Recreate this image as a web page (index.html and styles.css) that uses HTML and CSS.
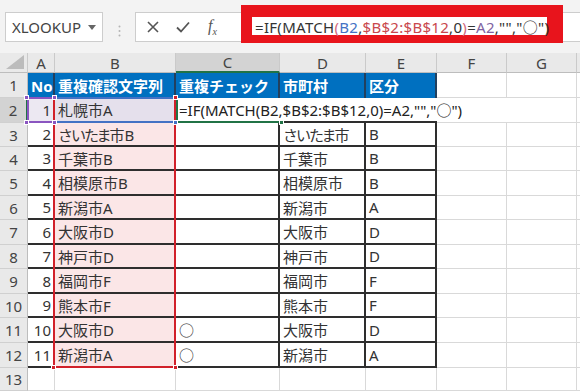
FILE: index.html
```html
<!DOCTYPE html>
<html lang="ja">
<head>
    <meta charset="UTF-8">
    <title>重複チェック</title>
    <link rel="stylesheet" href="styles.css">
</head>
<body>
    <div class="topbar">
        <div class="namebox">
            <span>XLOOKUP</span>
            <svg width="8" height="5" viewBox="0 0 8 5"><path d="M0 0H8L4 5Z" fill="#666"/></svg>
        </div>
        <div class="grip">
            <svg width="3" height="12" viewBox="0 0 3 12"><circle cx="1.5" cy="1.5" r="1" fill="#b4b4b4"/><circle cx="1.5" cy="6" r="1" fill="#b4b4b4"/><circle cx="1.5" cy="10.5" r="1" fill="#b4b4b4"/></svg>
        </div>
        <div class="fbar">
            <div class="fbtns">
                <svg class="ico-x" width="12" height="12" viewBox="0 0 12 12"><path d="M1 1L11 11M11 1L1 11" stroke="#555" stroke-width="1.6"/></svg>
                <svg class="ico-ok" width="14" height="12" viewBox="0 0 14 12"><path d="M1 6.5L5 10.5L13 1.5" stroke="#555" stroke-width="1.8" fill="none"/></svg>
                <span class="ico-fx"><i>f</i><sub>x</sub></span>
            </div>
            <div class="finput">
                <span class="fx-text">=IF(MATCH<span class="p-red">(</span><span class="r-blue">B2</span>,<span class="r-red">$B$2:$B$12</span>,0<span class="p-red">)</span>=<span class="r-pur">A2</span>,"","○")</span><span class="caret"></span>
            </div>
        </div>
    </div>

    <div class="sheet">
        <!-- column headers -->
        <div class="ch corner"><svg width="18" height="14" viewBox="0 0 18 14"><path d="M18 0V14H0Z" fill="#bcbcbc"/></svg></div>
        <div class="ch">A</div>
        <div class="ch">B</div>
        <div class="ch ch-sel">C</div>
        <div class="ch">D</div>
        <div class="ch">E</div>
        <div class="ch">F</div>
        <div class="ch">G</div>
        <div class="ch"></div>

        <!-- 1 -->
        <div class="rh">1</div>
        <div class="c t hd">No</div>
        <div class="c t hd">重複確認文字列</div>
        <div class="c t hd">重複チェック</div>
        <div class="c t hd">市町村</div>
        <div class="c t hd">区分</div>
        <div class="c"></div>
        <div class="c"></div>
        <div class="c"></div>

        <!-- 2 -->
        <div class="rh rh-sel">2</div>
        <div class="c t num ref-a">1
            <span class="mk mk-pur tl"></span><span class="mk mk-pur tr"></span><span class="mk mk-pur bl"></span><span class="mk mk-pur br"></span>
        </div>
        <div class="c t rng ref-b">札幌市A
            <span class="mk mk-red tr"></span><span class="mk mk-blue br"></span>
        </div>
        <div class="c t open active"><span class="edit">=IF(MATCH(B2,$B$2:$B$12,0)=A2,"","○")</span>
            <span class="mk mk-green br"></span>
        </div>
        <div class="c t open"></div>
        <div class="c t open"></div>
        <div class="c open"></div>
        <div class="c"></div>
        <div class="c"></div>

        <!-- 3 -->
        <div class="rh">3</div>
        <div class="c t num">2</div>
        <div class="c t rng"><span class="kn">さいたま</span>市B</div>
        <div class="c t"></div>
        <div class="c t"><span class="kn">さいたま</span>市</div>
        <div class="c t">B</div>
        <div class="c"></div>
        <div class="c"></div>
        <div class="c"></div>

        <!-- 4 -->
        <div class="rh">4</div>
        <div class="c t num">3</div>
        <div class="c t rng">千葉市B</div>
        <div class="c t"></div>
        <div class="c t">千葉市</div>
        <div class="c t">B</div>
        <div class="c"></div>
        <div class="c"></div>
        <div class="c"></div>

        <!-- 5 -->
        <div class="rh">5</div>
        <div class="c t num">4</div>
        <div class="c t rng">相模原市B</div>
        <div class="c t"></div>
        <div class="c t">相模原市</div>
        <div class="c t">B</div>
        <div class="c"></div>
        <div class="c"></div>
        <div class="c"></div>

        <!-- 6 -->
        <div class="rh">6</div>
        <div class="c t num">5</div>
        <div class="c t rng">新潟市A</div>
        <div class="c t"></div>
        <div class="c t">新潟市</div>
        <div class="c t">A</div>
        <div class="c"></div>
        <div class="c"></div>
        <div class="c"></div>

        <!-- 7 -->
        <div class="rh">7</div>
        <div class="c t num">6</div>
        <div class="c t rng">大阪市D</div>
        <div class="c t"></div>
        <div class="c t">大阪市</div>
        <div class="c t">D</div>
        <div class="c"></div>
        <div class="c"></div>
        <div class="c"></div>

        <!-- 8 -->
        <div class="rh">8</div>
        <div class="c t num">7</div>
        <div class="c t rng">神戸市D</div>
        <div class="c t"></div>
        <div class="c t">神戸市</div>
        <div class="c t">D</div>
        <div class="c"></div>
        <div class="c"></div>
        <div class="c"></div>

        <!-- 9 -->
        <div class="rh">9</div>
        <div class="c t num">8</div>
        <div class="c t rng">福岡市F</div>
        <div class="c t"></div>
        <div class="c t">福岡市</div>
        <div class="c t">F</div>
        <div class="c"></div>
        <div class="c"></div>
        <div class="c"></div>

        <!-- 10 -->
        <div class="rh">10</div>
        <div class="c t num">9</div>
        <div class="c t rng">熊本市F</div>
        <div class="c t"></div>
        <div class="c t">熊本市</div>
        <div class="c t">F</div>
        <div class="c"></div>
        <div class="c"></div>
        <div class="c"></div>

        <!-- 11 -->
        <div class="rh">11</div>
        <div class="c t num">10</div>
        <div class="c t rng">大阪市D</div>
        <div class="c t">○</div>
        <div class="c t">大阪市</div>
        <div class="c t">D</div>
        <div class="c"></div>
        <div class="c"></div>
        <div class="c"></div>

        <!-- 12 -->
        <div class="rh">12</div>
        <div class="c t num">11</div>
        <div class="c t rng rng-end">新潟市A
            <span class="mk mk-red bl"></span><span class="mk mk-red br"></span>
        </div>
        <div class="c t">○</div>
        <div class="c t">新潟市</div>
        <div class="c t">A</div>
        <div class="c"></div>
        <div class="c"></div>
        <div class="c"></div>

        <!-- 13 -->
        <div class="rh">13</div>
        <div class="c"></div>
        <div class="c"></div>
        <div class="c"></div>
        <div class="c"></div>
        <div class="c"></div>
        <div class="c"></div>
        <div class="c"></div>
        <div class="c"></div>
    </div>
</body>
</html>
```

FILE: styles.css
```css
* {
    margin: 0;
    padding: 0;
    box-sizing: border-box;
}

body {
    width: 580px;
    height: 391px;
    overflow: hidden;
    background: #f3f3f3;
    font-family: "Noto Sans", "Noto Sans CJK JP", sans-serif;
    color: #333;
}

/* ---- formula bar ---- */

.topbar {
    display: flex;
    align-items: flex-start;
    height: 53px;
}

.namebox {
    display: flex;
    align-items: center;
    justify-content: space-between;
    width: 98px;
    height: 30px;
    margin: 12px 0 0 5px;
    padding: 0 6px 0 6px;
    background: #fff;
    border: 1px solid #cdcdcd;
    font-size: 15px;
    color: #444;
}

.grip {
    width: 32px;
    margin-top: 20px;
    text-align: center;
}

.fbar {
    flex: 1;
    display: flex;
    align-items: flex-start;
    height: 30px;
    margin-top: 12px;
    background: #fff;
    border: 1px solid #cdcdcd;
    border-right: none;
}

.fbtns {
    display: flex;
    align-items: center;
    width: 105px;
    height: 28px;
}

.ico-x {
    margin-left: 11px;
}

.ico-ok {
    margin-left: 17px;
}

.ico-fx {
    margin-left: 18px;
    font-family: "Liberation Serif", serif;
    font-size: 16px;
    color: #555;
}

.ico-fx sub {
    font-size: 10px;
    font-style: italic;
}

.finput {
    display: flex;
    align-items: center;
    width: 322px;
    height: 38px;
    margin-top: -8px;
    padding-left: 3px;
    background: #fff;
    border-style: solid;
    border-color: #e8141c;
    border-width: 12px 16px 8px 11px;
    font-size: 15px;
    letter-spacing: 0.3px;
    white-space: nowrap;
    color: #333;
}

.r-blue { color: #4472c4; }
.r-red { color: #c9474d; }
.r-pur { color: #8064a2; }
.p-red { color: #d2687c; }

.caret {
    width: 1px;
    height: 18px;
    margin-left: 1px;
    background: #000;
}

/* ---- sheet grid ---- */

.sheet {
    display: grid;
    grid-template-columns: 28px 27px 121px 104px 86px 71px 70px 70px 1fr;
    grid-template-rows: 20px 25px 25px 24px 24px 25px 24px 25px 24px 25px 24px 25px 25px 1fr;
    height: 338px;
    background: #fff;
    font-size: 15px;
}

.ch, .rh {
    display: flex;
    align-items: center;
    justify-content: center;
    background: #e9e9e9;
    color: #444;
    border-right: 1px solid #cacaca;
    border-bottom: 1px solid #bdbdbd;
}

.corner {
    justify-content: flex-end;
    align-items: flex-end;
    padding: 0 3px 3px 0;
}

.ch-sel {
    background: #d3d3d3;
    border-bottom: 2px solid #217346;
}

.rh {
    border-bottom-color: #d0d0d0;
    border-right-color: #bdbdbd;
}

.rh-sel {
    background: #d3d3d3;
    border-right: 2px solid #217346;
}

.c {
    position: relative;
    display: flex;
    align-items: center;
    padding-left: 3px;
    white-space: nowrap;
    border-right: 1px solid #d9d9d9;
    border-bottom: 1px solid #d9d9d9;
    color: #333;
}

.kn {
    letter-spacing: -2px;
}

.t {
    border-right: 2px solid #2e2e2e;
    border-bottom: 2px solid #2e2e2e;
}

.hd {
    background: #0070c0;
    color: #fff;
    font-weight: bold;
    border-right-color: #22405e;
    border-bottom: none;
}

.num {
    justify-content: flex-end;
    padding: 0 2px 0 0;
}

.open {
    border-right: none;
}

.rng {
    background: #fbe6e7;
}

.rng::before {
    content: "";
    position: absolute;
    top: 0;
    bottom: -2px;
    left: -2px;
    right: -2px;
    border-left: 2px solid #d1202a;
    border-right: 2px solid #d1202a;
    z-index: 2;
}

.rng-end::before {
    border-bottom: 2px solid #d1202a;
}

.ref-a {
    background: #ece8f2;
}

.ref-a::after {
    content: "";
    position: absolute;
    inset: -1px -2px -2px -1px;
    border: 2px solid #8a55c0;
    z-index: 1;
}

.ref-b {
    background: #e5e0ec;
}

.ref-b::after {
    content: "";
    position: absolute;
    inset: -1px -2px -2px -2px;
    border: 2px solid #4472c4;
    z-index: 1;
}

.active {
    z-index: 3;
    overflow: visible;
}

.active::after {
    content: "";
    position: absolute;
    top: 0;
    left: 0;
    width: 104px;
    bottom: -2px;
    border-left: 2px solid #217346;
    border-bottom: 2px solid #217346;
}

.edit {
    position: relative;
    z-index: 4;
    color: #222;
}

/* range corner handles */

.mk {
    position: absolute;
    width: 5px;
    height: 5px;
    z-index: 5;
    border: 1px solid #fff;
}

.mk.tl { left: -4px; top: -3px; }
.mk.tr { right: -4px; top: -3px; }
.mk.bl { left: -4px; bottom: -4px; }
.mk.br { right: -4px; bottom: -4px; }

.mk-pur { background: #8a55c0; }
.mk-red { background: #d1202a; }
.mk-blue { background: #4472c4; }
.mk-green { background: #217346; }
```
